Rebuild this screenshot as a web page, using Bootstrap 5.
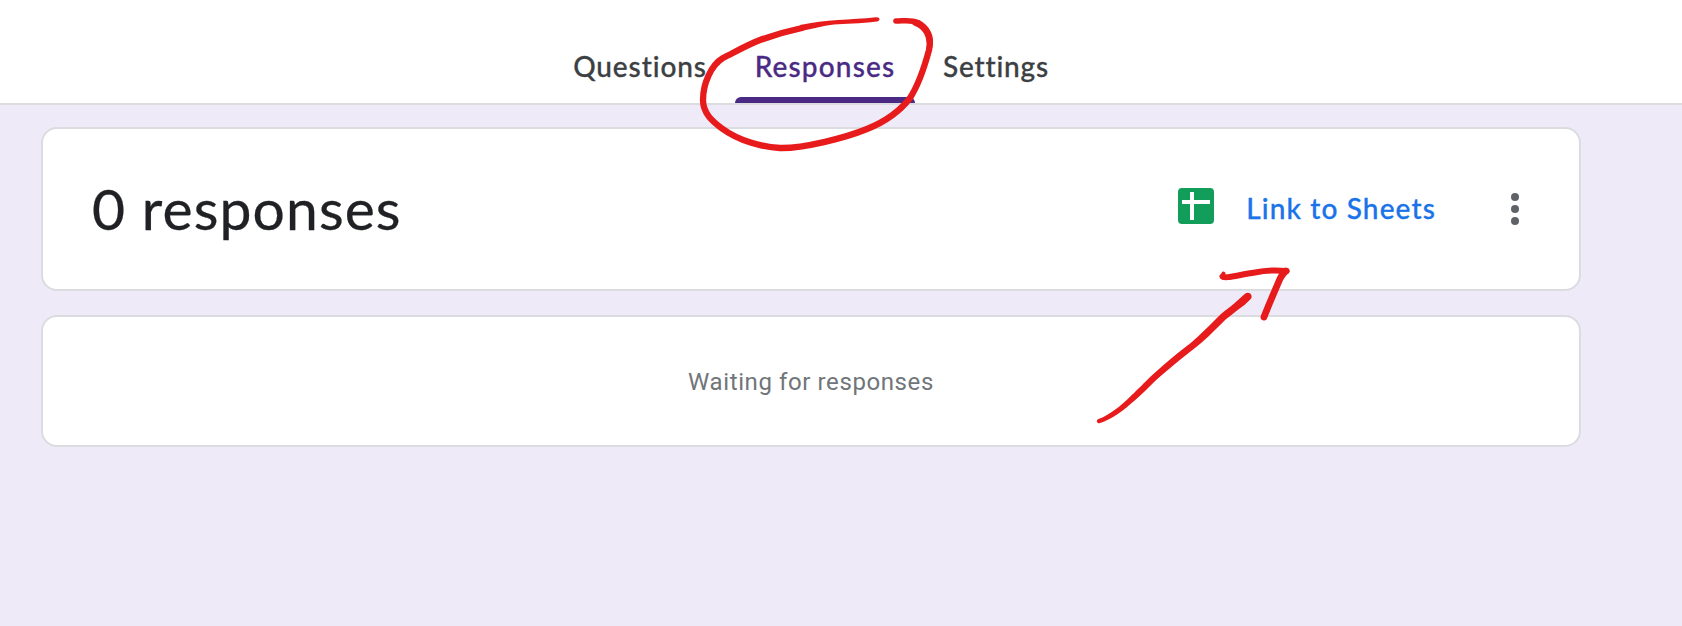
<!DOCTYPE html>
<html lang="en">
<head>
<meta charset="utf-8">
<title>Form responses</title>
<link href="https://cdn.jsdelivr.net/npm/bootstrap@5.3.0/dist/css/bootstrap.min.css" rel="stylesheet">
<style>
  body { background: #eeeaf8; font-family: Lato, "Liberation Sans", sans-serif; width: 1682px; height: 626px; overflow: hidden; }
  .form-header { height: 105px; border-bottom: 2px solid #dadce0; }
  .form-content { width: 1622px; }
  .form-tabs { gap: 7px; }
  .form-tabs .nav-link { color: #3c4043; font-size: 28px; font-weight: 500; line-height: 34px; padding: 49px 0 0; height: 103px; text-align: center; white-space: nowrap; position: relative; -webkit-text-stroke: .3px; }
  .form-tabs .nav-link.active { color: #4b2a85; }
  .form-tabs .nav-link.active::after { content: ""; position: absolute; left: 0; right: 0; bottom: 0; height: 6px; background: #4b2a85; border-radius: 6px 6px 0 0; }
  .tab-q { width: 176px; letter-spacing: .9px; }
  .tab-r { width: 180px; letter-spacing: 1.15px; }
  .tab-s { width: 148px; letter-spacing: .8px; }
  .form-body { padding: 22px 0 0 41px; gap: 24px; }
  .form-card { border: 2px solid #dadce0; border-radius: 16px; margin-right: 41px; }
  .summary { height: 164px; padding: 0 60px 0 49px; }
  .summary h1 { font-size: 57px; line-height: 68px; color: #202124; font-weight: 400; letter-spacing: 1.1px; padding-bottom: 2px; -webkit-text-stroke: .3px; }
  .sheet-link { font-size: 28px; font-weight: 500; line-height: 34px; color: #1a73e8; gap: 32px; letter-spacing: 1.13px; margin-right: 75px; padding-bottom: 2px; -webkit-text-stroke: .3px; }
  .sheet-link svg { margin-bottom: 4px; }
  .waiting { height: 132px; padding-top: 2px; font: 400 24px/32px Roboto, sans-serif; letter-spacing: .6px; color: #70757a; }
  .ink { left: 0; top: 0; pointer-events: none; }
</style>
</head>
<body class="position-relative">
<header class="form-header bg-white">
  <div class="form-content d-flex justify-content-center">
    <nav class="nav form-tabs flex-nowrap">
      <a class="nav-link tab-q" href="#">Questions</a>
      <a class="nav-link tab-r active" href="#">Responses</a>
      <a class="nav-link tab-s" href="#">Settings</a>
    </nav>
  </div>
</header>
<main class="form-body form-content d-flex flex-column">
  <section class="form-card summary bg-white d-flex align-items-center">
    <h1 class="mb-0 me-auto">0 responses</h1>
    <a class="sheet-link d-flex align-items-center text-decoration-none text-nowrap" href="#">
      <svg width="36" height="36" viewBox="0 0 36 36"><rect width="36" height="36" rx="4" fill="#129d5a"/><path d="M4 14h28M14 4v28" stroke="#fff" stroke-width="4"/></svg>
      <span>Link to Sheets</span>
    </a>
    <svg width="8" height="32" viewBox="0 0 8 32" fill="#5f6368"><circle cx="4" cy="4" r="4"/><circle cx="4" cy="16" r="4"/><circle cx="4" cy="28" r="4"/></svg>
  </section>
  <section class="form-card waiting bg-white d-flex align-items-center justify-content-center">Waiting for responses</section>
</main>
<svg class="ink position-absolute" width="1682" height="626" viewBox="0 0 1682 626" fill="none" stroke="#e71b1b" stroke-linecap="round" stroke-linejoin="round">
  <!-- loop -->
  <path stroke="none" fill="#e71b1b" d="M800 25C826 19.500 850 20 876 17.300C880.500 17 880.500 21 877 21.500C860 23.500 845 24 834 24.500C822 26 813 28.500 801 31Z"/>
  <path stroke-width="6.300" d="M802 28C788 31 774 35 760 40C747 45 735 52 723 58C711 65 703 84 703 100C703 113 712 121 722 128.500C739 141 762 147 780 148C803 148.500 845 138 867 129C887 121 900 111 910 98C919 84 925 65 929 50C932 36 925 26 915 22.500"/>
  <path stroke-width="5.600" d="M896 21C904 21 911 19.500 918 22.500C928 28 932 37 929.500 47"/>
  <!-- arrow -->
  <path stroke="none" fill="#e71b1b" d="M1098.500 419C1105 417 1109 414 1115.300 409.600C1120 406 1126 401 1131.300 395.500C1139 388 1144 383 1151.200 375.900C1159 369 1167 362 1174.500 355.800C1184 348 1190 344 1197.700 336.700C1206 329 1213 322 1221 314C1226 310 1230 307 1234.400 303.300L1245 293.700C1249 290.500 1254 295.500 1250.500 299.200Q1245 305 1239 309C1234 313 1230 316 1225.600 319.400C1218 327 1210 335 1202.300 341.900C1194 349 1187 354 1178.900 360.800C1170 368 1163 374 1155.400 380.700C1148 388 1142 394 1135.300 399.900C1129 405 1124 410 1118.100 413.800C1112 418 1106 421 1099.500 423.300C1096.500 423.300 1096 420 1098.500 419Z"/>
  <path stroke-width="6" d="M1222.500 276.500C1224 279 1238 275 1255 272.500C1267 270 1276 270 1286.500 271"/>
  <path stroke-width="4" d="M1223.500 273.500L1222 277"/>
  <path stroke-width="6.800" d="M1286 271Q1282 274 1279 281C1274 293 1269 304 1264 317"/>
</svg>
<script src="https://cdn.jsdelivr.net/npm/bootstrap@5.3.0/dist/js/bootstrap.bundle.min.js"></script>
</body>
</html>
